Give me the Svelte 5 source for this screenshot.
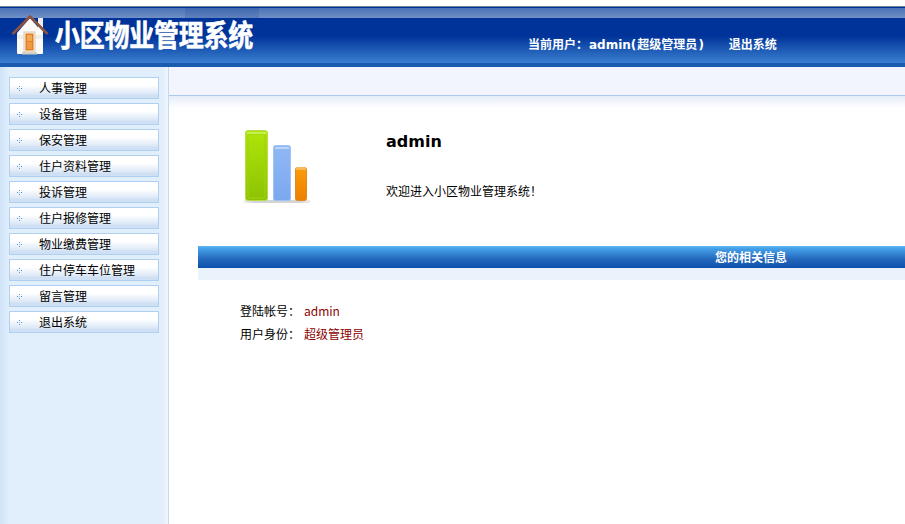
<script>
	const menu = [
		'人事管理',
		'设备管理',
		'保安管理',
		'住户资料管理',
		'投诉管理',
		'住户报修管理',
		'物业缴费管理',
		'住户停车车位管理',
		'留言管理',
		'退出系统'
	];
</script>

<div class="page">
	<header class="header">
		<div class="header__shine">
			<span class="header__patch"></span>
		</div>
		<div class="header__body">
			<div class="brand">
				<svg class="brand__icon" width="38" height="44" viewBox="0 0 38 44">
					<rect x="27" y="5" width="5" height="15" fill="#f0eee8" />
					<path d="M6 20 L19 5 L32 20 V40 Q32 41 31 41 H7 Q6 41 6 40 Z" fill="#fbfaf6" />
					<path d="M6 22 H32 V26 H6 Z" fill="#e4e0d8" opacity="0.5" />
					<path d="M1.5 21 L19 3.5 L36.5 21" fill="none" stroke="#8c5240" stroke-width="2.5" stroke-linejoin="round" />
					<rect x="13" y="19" width="11" height="20" fill="#f6efe2" stroke="#d8ccb8" />
					<rect x="14.5" y="20.5" width="8" height="17" fill="#e37f2a" />
					<rect x="16" y="22" width="5" height="6" fill="#f4a850" />
					<rect x="16" y="29" width="5" height="7" fill="#ef9a40" />
					<rect x="11" y="39" width="15" height="2.5" fill="#d5d0c6" />
				</svg>
				<span class="brand__title">小区物业管理系统</span>
			</div>
			<div class="userbar">
				<span>当前用户：<span class="userbar__name">admin(</span>超级管理员<span class="userbar__paren">)</span></span>
				<span>退出系统</span>
			</div>
		</div>
		<div class="header__foot"></div>
	</header>

	<div class="main">
		<aside class="sidebar">
			<ul class="menu">
				{#each menu as item}
					<li class="menu__item">
						<svg class="menu__dot" width="5" height="5" viewBox="0 0 5 5">
							<rect x="2" y="0" width="1" height="1" fill="#4a90e0" />
							<rect x="0" y="2" width="1" height="1" fill="#4a90e0" />
							<rect x="4" y="2" width="1" height="1" fill="#4a90e0" />
							<rect x="2" y="4" width="1" height="1" fill="#4a90e0" />
							<rect x="2" y="2" width="1" height="1" fill="#a8c8f0" />
						</svg>
						<span>{item}</span>
					</li>
				{/each}
			</ul>
		</aside>

		<main class="content">
			<div class="toolbar"></div>
			<div class="toolbar-fade"></div>

			<section class="welcome">
				<svg class="welcome__chart" width="68" height="76" viewBox="0 0 68 76">
					<defs>
						<linearGradient id="green" x1="0" y1="0" x2="0" y2="1">
							<stop offset="0" stop-color="#aee60a" />
							<stop offset="1" stop-color="#8cc204" />
						</linearGradient>
						<linearGradient id="blue" x1="0" y1="0" x2="0" y2="1">
							<stop offset="0" stop-color="#8fb8f4" />
							<stop offset="1" stop-color="#7ca8ee" />
						</linearGradient>
						<linearGradient id="orange" x1="0" y1="0" x2="0" y2="1">
							<stop offset="0" stop-color="#fc9c08" />
							<stop offset="1" stop-color="#ec8000" />
						</linearGradient>
						<linearGradient id="shadow" x1="0" y1="0" x2="1" y2="0">
							<stop offset="0" stop-color="#eee" />
							<stop offset="0.15" stop-color="#d4d4d4" />
							<stop offset="0.85" stop-color="#d4d4d4" />
							<stop offset="1" stop-color="#eee" />
						</linearGradient>
					</defs>
					<rect x="0" y="71" width="66" height="3" fill="url(#shadow)" />
					<rect x="1.5" y="1.5" width="22" height="70" rx="2.5" fill="url(#green)" stroke="#b8dc50" />
					<rect x="4" y="5" width="17" height="64" rx="2" fill="none" stroke="#a0d408" />
					<rect x="3" y="3" width="19" height="2" fill="#c8ee50" />
					<rect x="29.5" y="16.5" width="17" height="55" rx="2" fill="url(#blue)" stroke="#a0c2f4" />
					<rect x="31" y="18" width="14" height="2" fill="#bcd4f8" />
					<rect x="51.5" y="38.5" width="11" height="33" rx="2" fill="url(#orange)" stroke="#e08a20" />
					<rect x="52" y="38" width="10" height="3" rx="1" fill="#fbb85a" />
				</svg>
				<div class="welcome__text">
					<h2 class="welcome__name">admin</h2>
					<p class="welcome__msg">欢迎进入小区物业管理系统！</p>
				</div>
			</section>

			<div class="section-bar"><span>您的相关信息</span></div>
			<div class="section-sub"></div>

			<dl class="info">
				<div class="info__row">
					<dt>登陆帐号：</dt>
					<dd>admin</dd>
				</div>
				<div class="info__row">
					<dt>用户身份：</dt>
					<dd>超级管理员</dd>
				</div>
			</dl>
		</main>
	</div>
</div>

<style>
	:global(body) {
		margin: 0;
		background: #fff;
	}
	* {
		box-sizing: border-box;
	}
	.page {
		display: flex;
		flex-direction: column;
		height: 524px;
		overflow: hidden;
		padding-top: 6px;
		font-family: 'Noto Sans CJK SC', 'Liberation Sans', sans-serif;
		font-size: 12px;
		color: #000;
	}
	.header {
		flex: none;
		height: 61px;
		border-top: 1px solid #6e7f98;
		display: flex;
		flex-direction: column;
		background: #003399;
	}
	.header__shine {
		flex: none;
		height: 10px;
		margin-top: 1px;
		background: linear-gradient(#4a72b6, #7090c6);
		padding-left: 185px;
	}
	.header__patch {
		display: block;
		width: 74px;
		height: 10px;
		background: linear-gradient(#3f68ae, #5f82bc);
	}
	.header__body {
		flex: 1;
		min-height: 0;
		display: flex;
		background: linear-gradient(#003399 0, #003399 40%, #3a80d0 100%);
		padding-left: 11px;
	}
	.header__foot {
		flex: none;
		height: 4px;
		background: #1c5cb0;
	}
	.brand {
		display: flex;
		align-items: flex-start;
		width: 517px;
		flex: none;
		margin-top: -5px;
	}
	.brand__icon {
		flex: none;
		margin-right: 6px;
	}
	.brand__title {
		font-size: 25px;
		letter-spacing: -0.25px;
		line-height: 38px;
		font-weight: 700;
		color: #fff;
		margin-top: 1px;
		white-space: nowrap;
		transform: scaleY(1.18);
		-webkit-text-stroke: 0.5px #fff;
	}
	.userbar {
		display: flex;
		gap: 24px;
		padding-top: 16px;
		font-weight: 700;
		color: #fff;
		line-height: 20px;
		white-space: nowrap;
	}
	.userbar__name,
	.userbar__paren {
		font-family: 'DejaVu Sans', sans-serif;
		font-size: 12px;
	}
	.userbar__name {
		padding: 0 1px;
	}
	.userbar__paren {
		padding: 0 1px;
	}
	.main {
		flex: 1;
		min-height: 0;
		display: flex;
	}
	.sidebar {
		flex: none;
		width: 169px;
		padding: 10px 9px 0;
		border-right: 1px solid #c4daf2;
		background: linear-gradient(90deg, #cfe3f8 0, #e1eefb 9px, #e1eefb 162px, #eef5fd 167px);
	}
	.menu {
		list-style: none;
		margin: 0;
		padding: 0;
		display: flex;
		flex-direction: column;
		gap: 4px;
		width: 150px;
	}
	.menu__item {
		height: 22px;
		display: flex;
		align-items: center;
		gap: 17px;
		padding-left: 7px;
		border: 1px solid #b0d0f0;
		background: linear-gradient(#fff 0, #fff 35%, #dce8f6 80%, #cfe0f4 85%, #cfe0f4 100%);
		line-height: 20px;
		white-space: nowrap;
	}
	.menu__dot {
		flex: none;
	}
	.content {
		flex: 1;
		min-width: 0;
		display: flex;
		flex-direction: column;
	}
	.toolbar {
		flex: none;
		height: 29px;
		background: #f2f5fb;
		border-bottom: 1px solid #aecbef;
	}
	.toolbar-fade {
		flex: none;
		height: 12px;
		background: linear-gradient(#e6edf8, #fff);
	}
	.welcome {
		flex: none;
		display: flex;
		height: 138px;
		padding: 21px 0 0 75px;
	}
	.welcome__chart {
		flex: none;
		margin-right: 74px;
	}
	.welcome__text {
		padding-top: 1px;
	}
	.welcome__name {
		margin: 0;
		font-family: 'DejaVu Sans', sans-serif;
		font-size: 16px;
		font-weight: 700;
		line-height: 24px;
	}
	.welcome__msg {
		margin: 27px 0 0;
		line-height: 20px;
	}
	.section-bar {
		flex: none;
		margin-left: 29px;
		height: 22px;
		padding-left: 517px;
		background: linear-gradient(#60b4f0 0, #44a0e8 12%, #2468bc 60%, #0c50ac 100%);
		color: #fff;
		font-weight: 700;
		line-height: 22px;
	}
	.section-sub {
		flex: none;
		margin-left: 29px;
		height: 12px;
		background: #eaf2fb;
	}
	.info {
		margin: 19px 0 0 71px;
	}
	.info__row {
		display: flex;
		height: 23px;
		align-items: center;
	}
	.info dt {
		width: 64px;
	}
	.info dd {
		margin: 0;
		color: #8b0000;
	}
</style>
